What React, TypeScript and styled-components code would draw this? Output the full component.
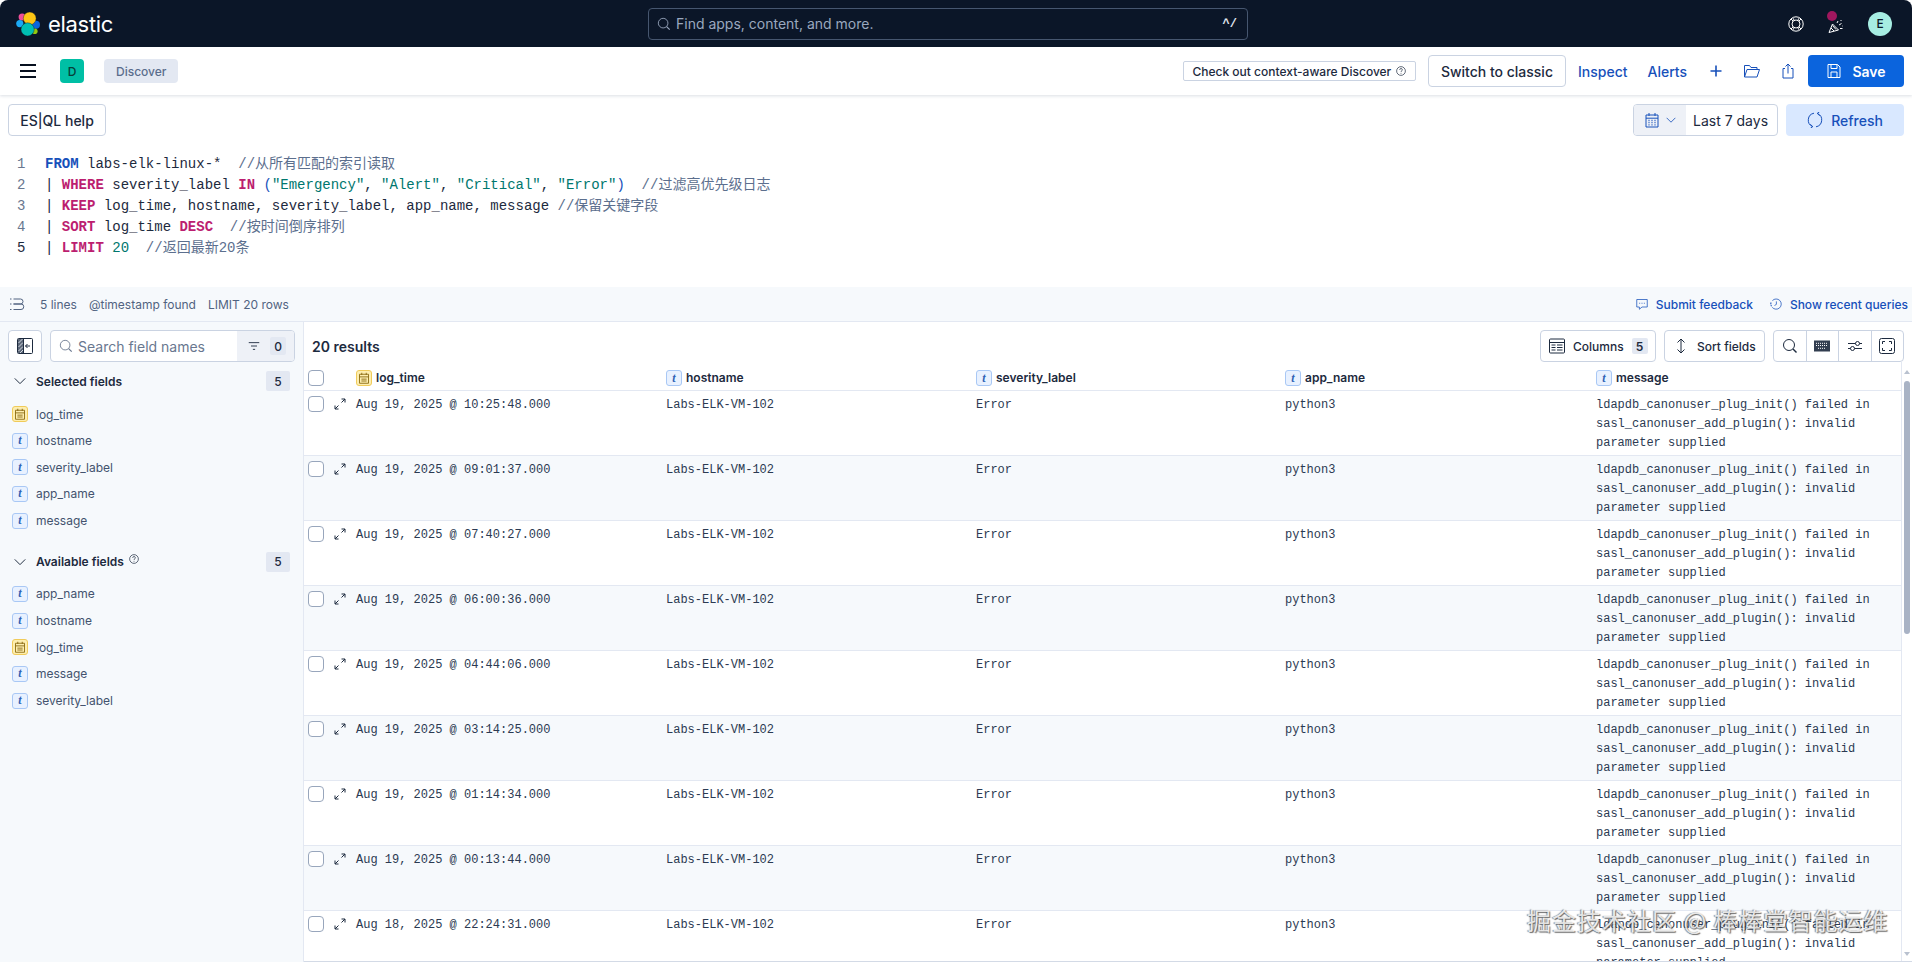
import React from 'react';
import styled, { createGlobalStyle } from 'styled-components';

const UI = `Inter, "Noto Sans", sans-serif`;
const MONO = `"Liberation Mono", "Noto Sans CJK SC", monospace`;

const Global = createGlobalStyle`
  html, body { margin: 0; padding: 0; background: #fff; }
  * { box-sizing: border-box; }
  #root { height: 962px; }
`;

const Page = styled.div`
  position: relative; display: flex; flex-direction: column; width: 1912px; height: 962px;
  overflow: hidden; font-family: ${UI}; color: #1d2a3e; background: #fff;
`;

/* ---------- top bar ---------- */
const TopBar = styled.header`
  flex: none; height: 47px; display: grid; grid-template-columns: 648px 600px 1fr; align-items: center;
  background: #0b1628; border-radius: 8px 8px 0 0;
`;
const Brand = styled.div`display: flex; align-items: center; gap: 8px; padding-left: 16px;`;
const Wordmark = styled.span`color: #fff; font-size: 22px; font-weight: 400; letter-spacing: -0.3px; line-height: 24px;`;
const GlobalSearch = styled.div`
  height: 32px; display: flex; align-items: center; gap: 5px; padding: 0 10px 0 8px;
  border: 1px solid #46566f; border-radius: 4px; color: #9aa8bf; font-size: 14px;
`;
const Shortcut = styled.span`margin-left: auto; font-family: ${MONO}; font-size: 12px; font-weight: 700; color: #e3e8f2;`;
const TopIcons = styled.div`display: flex; justify-content: flex-end; align-items: center; gap: 24px; padding-right: 20px; color: #fff;`;
const Avatar = styled.div`
  width: 24px; height: 24px; border-radius: 50%; background: #a6ede2; color: #0b1628;
  display: flex; align-items: center; justify-content: center; font-size: 12px; font-weight: 500;
`;

/* ---------- app bar ---------- */
const AppBar = styled.div`
  position: relative; flex: none; height: 48px; display: flex; align-items: center; padding: 0 8px 0 20px;
  background: #fff; box-shadow: 0 1px 3px rgba(30, 50, 90, .16);
`;
const SpaceBadge = styled.div`
  width: 24px; height: 24px; margin-left: 24px; border-radius: 4px; background: #00bfa5; color: #07403a;
  display: flex; align-items: center; justify-content: center; font-size: 12px; font-weight: 500;
`;
const Crumb = styled.div`
  height: 24px; margin-left: 20px; padding: 0 12px; border-radius: 4px; background: #e3e8f2; color: #5a6d8c;
  display: flex; align-items: center; font-size: 12px; font-weight: 500;
`;
const BarRight = styled.div`margin-left: auto; display: flex; align-items: center; gap: 12px;`;
const ContextBox = styled.div`
  height: 20px; width: 233px; display: flex; align-items: center; justify-content: center; gap: 5px;
  border: 1px solid #cad3e2; border-radius: 2px; font-size: 12px; font-weight: 500; color: #1d2a3e;
`;
const OutlineButton = styled.button`
  height: 32px; padding: 0 12px; font: 500 14px ${UI}; color: #1d2a3e; background: #fff;
  border: 1px solid #cad3e2; border-radius: 4px; white-space: nowrap;
`;
const NavGroup = styled.div`display: flex; align-items: center; gap: 20px; color: #1750ba;`;
const NavLink = styled.span`font-size: 14px; font-weight: 500; color: #1750ba; & + svg { margin-left: 1px; }`;
const SaveButton = styled.button`
  width: 96px; height: 32px; display: flex; align-items: center; justify-content: center; gap: 10px;
  background: #0b64dd; color: #fff; border: 0; border-radius: 4px; font: 600 14px ${UI};
`;

/* ---------- query ---------- */
const QueryBar = styled.div`
  flex: none; height: 57px; display: flex; justify-content: space-between; align-items: flex-start; padding: 9px 8px 0;
`;
const HelpButton = styled(OutlineButton)`width: 98px; padding: 0;`;
const QueryRight = styled.div`display: flex; gap: 8px;`;
const DatePicker = styled.div`
  width: 145px; height: 32px; display: flex; border: 1px solid #cad3e2; border-radius: 4px; overflow: hidden; font-size: 14px;
`;
const DatePrepend = styled.div`
  width: 52px; display: flex; align-items: center; justify-content: center; gap: 6px; background: #eef1f7; color: #1750ba;
`;
const DateValue = styled.div`flex: 1; display: flex; align-items: center; padding-left: 7px; white-space: nowrap; color: #1d2a3e;`;
const RefreshButton = styled.button`
  width: 118px; height: 32px; display: flex; align-items: center; justify-content: center; gap: 8px;
  background: #d9e8ff; color: #1750ba; border: 0; border-radius: 4px; font: 500 14px ${UI};
`;
const Editor = styled.div`flex: none; height: 135px; padding-top: 2px; font-family: ${MONO}; font-size: 14px; line-height: 21px;`;
const CodeLine = styled.div`display: flex; height: 21px; white-space: pre;`;
const LineNo = styled.span<{ $active?: boolean }>`
  width: 45px; padding-left: 17px; color: ${p => (p.$active ? '#1d2a3e' : '#69778f')};
`;
const Kw = styled.b<{ $blue?: boolean }>`color: ${p => (p.$blue ? '#1750ba' : '#bc1e70')}; font-weight: 700;`;
const Str = styled.span`color: #00776e;`;
const Cmt = styled.span`color: #5c6f8e;`;
const Paren = styled.span`color: #1750ba;`;
const Code = styled.span`color: #1d2a3e;`;

const EditorFoot = styled.div`
  flex: none; height: 35px; display: flex; align-items: center; padding: 0 4px 0 9px; background: #f6f9fc;
  border-bottom: 1px solid #e3e8f2; font-size: 12px; color: #516381;
`;
const FootStat = styled.span<{ $gap: number }>`margin-left: ${p => p.$gap}px; white-space: nowrap;`;
const FootLink = styled.span<{ $first?: boolean }>`
  display: flex; align-items: center; gap: 8px; color: #1750ba; font-weight: 500; white-space: nowrap;
  margin-left: ${p => (p.$first ? 'auto' : '17px')};
`;

/* ---------- main ---------- */
const Main = styled.div`flex: 1; min-height: 0; display: flex;`;
const Sidebar = styled.aside`flex: none; width: 304px; padding: 8px 0 0; background: #f6f9fc; border-right: 1px solid #e3e8f2;`;
const SideTop = styled.div`display: flex; gap: 8px; padding: 0 8px; height: 32px;`;
const IconButton = styled.button`
  width: 34px; height: 32px; padding: 0; display: flex; align-items: center; justify-content: center;
  background: #fff; border: 1px solid #cad3e2; border-radius: 4px;
`;
const FieldSearch = styled.div`
  width: 245px; display: flex; align-items: center; background: #fff; border: 1px solid #cad3e2; border-radius: 4px; overflow: hidden;
`;
const FieldInput = styled.div`
  flex: 1; display: flex; align-items: center; gap: 5px; padding-left: 8px; color: #69778f; font-size: 14px; white-space: nowrap;
`;
const FilterPart = styled.div`
  width: 57px; height: 100%; display: flex; align-items: center; gap: 10px; padding-left: 11px; background: #eef1f7; color: #1d2a3e;
`;
const FilterCount = styled.span`
  width: 16px; height: 18px; display: flex; align-items: center; justify-content: center; border-radius: 2px;
  background: #e3e8f2; font-size: 12px; font-weight: 500;
`;
const SectionHead = styled.div<{ $top: number }>`
  height: 20px; margin-top: ${p => p.$top}px; padding: 0 13px 0 14px; display: flex; align-items: center; gap: 10px;
  font-size: 12px; font-weight: 600; color: #1d2a3e;
`;
const Help = styled.span`display: inline-flex; margin-left: -5px; margin-top: -5px;`;
const CountBadge = styled.span`
  margin-left: auto; width: 24px; height: 20px; display: flex; align-items: center; justify-content: center;
  border-radius: 2px; background: #e3e8f2; font-size: 12px; font-weight: 500;
`;
const FieldList = styled.div<{ $top: number }>`margin-top: ${p => p.$top}px;`;
const FieldRow = styled.div`
  height: 26.67px; padding-left: 12px; display: flex; align-items: center; gap: 8px; font-size: 12px; color: #43536e;
`;
const TypeBox = styled.span<{ $date?: boolean }>`
  flex: none; width: 16px; height: 16px; display: inline-flex; align-items: center; justify-content: center; border-radius: 3px;
  background: ${p => (p.$date ? '#fdeeb0' : '#e8f1ff')};
  border: 1px solid ${p => (p.$date ? '#f0cb5a' : '#a9c8f5')};
  color: #2e62b5; font: italic 700 12px "Liberation Serif", serif;
`;

const Content = styled.section`flex: 1; min-width: 0; display: flex; flex-direction: column;`;
const Toolbar = styled.div`
  flex: none; height: 40px; padding: 8px 8px 0 8px; display: flex; align-items: center; gap: 8px;
`;
const Results = styled.div`margin-right: auto; font-size: 14px; font-weight: 600; color: #1d2a3e;`;
const ToolButton = styled.div<{ $w: number }>`
  width: ${p => p.$w}px; height: 32px; display: flex; align-items: center; gap: 8px; padding-left: 8px;
  background: #fff; border: 1px solid #cad3e2; border-radius: 4px; font-size: 12px; font-weight: 500; color: #1d2a3e;
`;
const ToolCount = styled.span`
  width: 16px; height: 16px; display: flex; align-items: center; justify-content: center;
  border-radius: 2px; background: #e3e8f2; font-size: 12px; font-weight: 600;
`;
const ToolGroup = styled.div`display: flex; width: 131px; height: 32px; border: 1px solid #cad3e2; border-radius: 4px; overflow: hidden;`;
const ToolCell = styled.div`
  flex: 1; display: flex; align-items: center; justify-content: center; color: #1d2a3e;
  & + & { border-left: 1px solid #cad3e2; }
`;

const TableWrap = styled.div`flex: 1; min-height: 0; display: flex;`;
const Table = styled.div`flex: 1; min-width: 0; padding-top: 8px; overflow: hidden;`;
const Cols = `grid-template-columns: 52px 310px 310px 309px 311px 1fr;`;
const HeadRow = styled.div`
  height: 21px; display: grid; ${Cols} border-bottom: 1px solid #e3e8f2; font-size: 12px; font-weight: 600; color: #1d2a3e;
`;
const HeadCell = styled.div`display: flex; align-items: flex-start; gap: 4px; line-height: 16px;`;
const Row = styled.div<{ $alt: boolean }>`
  height: 65px; display: grid; ${Cols} padding-top: 5px; border-bottom: 1px solid #e3e8f2;
  background: ${p => (p.$alt ? '#f6f9fc' : '#fff')};
`;
const Controls = styled.div`display: flex; align-items: flex-start; gap: 10px; padding-left: 4px;`;
const ExpandWrap = styled.span`margin-top: 2px; display: flex; color: #1d2a3e;`;
const Check = styled.span`
  width: 16px; height: 16px; flex: none; border: 1px solid #98a6bc; border-radius: 4px; background: #fff;
`;
const Cell = styled.div`
  font-family: ${MONO}; font-size: 12px; line-height: 19px; color: #2b3a52;
`;
const MsgCell = styled(Cell)`white-space: pre-line;`;
const Scrollbar = styled.div`
  position: relative; flex: none; width: 11px; border-left: 1px solid #e3e8f2; background: #fff;
`;
const Thumb = styled.div`position: absolute; left: 2px; top: 19px; width: 6px; height: 253px; background: #a9b3c5; border-radius: 3px;`;
const ArrowUp = styled.div`
  position: absolute; left: 2px; top: 8px; width: 0; height: 0;
  border: 3px solid transparent; border-top: 0; border-bottom: 4px solid #b9c1cf;
`;
const ArrowDown = styled.div`
  position: absolute; left: 2px; bottom: 6px; width: 0; height: 0;
  border: 3px solid transparent; border-bottom: 0; border-top: 4px solid #b9c1cf;
`;
const BottomLine = styled.div`position: absolute; left: 304px; right: 0; bottom: 0; height: 1px; background: #d3dae6;`;
const Watermark = styled.div`
  position: absolute; left: 1527px; top: 903px; font-family: "Noto Sans CJK SC", sans-serif; font-size: 24px; line-height: 34px;
  letter-spacing: 1px; white-space: pre; color: rgba(255, 255, 255, .82);
  text-shadow: 1px 1px 1px rgba(60, 60, 60, .75), -1px 0 1px rgba(60, 60, 60, .6);
`;
const PopperBox = styled.div`position: relative; width: 16px; height: 16px; color: #fff;`;
const PopperArt = styled.svg`position: absolute; top: 3px; left: 0;`;
const PopperDot = styled.span`position: absolute; left: -1px; top: -5px; width: 10px; height: 10px; border-radius: 50%; background: #a0175e;`;
const IconSvg = styled.svg`flex: none; display: block;`;

/* ---------- icons ---------- */
const Svg = ({ s = 16, children, sw = 1 }: { s?: number; children: React.ReactNode; sw?: number }) => (
  <IconSvg width={s} height={s} viewBox="0 0 16 16" fill="none" stroke="currentColor" strokeWidth={sw}>{children}</IconSvg>
);
const ElasticLogo = () => (
  <IconSvg width="24" height="24" viewBox="0 0 24 24">
    <circle cx="6.2" cy="5" r="3.6" fill="#f04e98" />
    <circle cx="3.8" cy="11.6" r="3.6" fill="#1ba9f5" />
    <circle cx="20" cy="12.8" r="4" fill="#0b64dd" />
    <circle cx="18.8" cy="19.2" r="2.8" fill="#93c90e" />
    <circle cx="13.7" cy="6.4" r="6.4" fill="#fec514" stroke="#0b1628" strokeWidth=".4" />
    <circle cx="11.6" cy="17.4" r="6.6" fill="#00bfb3" stroke="#0b1628" strokeWidth=".4" />
  </IconSvg>
);
const Search = ({ s = 16 }: { s?: number }) => (
  <Svg s={s}><circle cx="7" cy="7" r="5.5" /><path d="M11 11l3.5 3.5" strokeWidth="1.4" /></Svg>
);
const LifeRing = () => (
  <Svg><circle cx="8" cy="8" r="7.2" /><circle cx="8" cy="8" r="4" /><path d="M3 3l2.2 2.2M13 3l-2.2 2.2M3 13l2.2-2.2M13 13l-2.2-2.2M5 2.2l1.2 2M11 2.2l-1.2 2M5 13.8l1.2-2M11 13.8l-1.2-2" /></Svg>
);
const Popper = () => (
  <PopperBox>
    <PopperArt width="16" height="16" viewBox="0 0 16 16" fill="none" stroke="currentColor">
      <path d="M1 13.5L4.5 5l6 6-9.500 2.500zM3 9l3 3M4.500 6.500l3.500 4M9 4l1-2M11 6l2.500-1.500M12 9.500h2.500M12.500 1.500h1M14 7h.5" />
    </PopperArt>
    <PopperDot />
  </PopperBox>
);
const Burger = () => (
  <IconSvg width="16" height="16" viewBox="0 0 16 16" stroke="#07101f" strokeWidth="2"><path d="M0 2h16M0 8h16M0 14h16" /></IconSvg>
);
const QMark = ({ s = 10 }: { s?: number }) => (
  <Svg s={s} sw={1.1}><circle cx="8" cy="8" r="7" /><path d="M5.800 6.200C5.800 4.800 6.800 4 8 4s2.200.8 2.200 2c0 1.700-2.200 1.700-2.200 3.500M8 11v1.300" /></Svg>
);
const Plus = () => <Svg sw={1.6}><path d="M8 2.500v11M2.500 8h11" /></Svg>;
const Folder = () => <Svg><path d="M.5 14V2.500h5l1.500 2h6v2M.5 14h12.500l2.500-7.500H3z" /></Svg>;
const Share = () => <Svg><path d="M5 5.500H3v9.500h10V5.500h-2M8 10.500V1M5.500 3.500L8 1l2.500 2.500" /></Svg>;
const Floppy = () => <Svg><path d="M2 1.500h9.500l2.500 2.500v10.500H2zM5 1.500v4h6v-4M5 14.500v-5.500h6v5.500" /></Svg>;
const Calendar = () => (
  <Svg><path d="M2 3h12v12H2zM2 6.200h12M5 1v3M11 1v3" /><path d="M4.500 8.500h1M7.500 8.500h1M10.500 8.500h1M4.500 10.700h1M7.500 10.700h1M10.500 10.700h1M4.500 12.800h1M7.500 12.800h1M10.500 12.800h1" strokeWidth="1.300" /></Svg>
);
const Chevron = ({ s = 10 }: { s?: number }) => <Svg s={s} sw={1.3}><path d="M1 4.500l7 7 7-7" /></Svg>;
const Refresh = () => (
  <Svg><path d="M7 1.200A7 7 0 0 0 5.500 14.500M3.300 12.300L5.800 14.600 3.600 16M9 14.800A7 7 0 0 0 10.500 1.500M12.700 3.700L10.200 1.400 12.400 0" /></Svg>
);
const ListIcon = () => (
  <Svg><path d="M4.500 3h7a2.500 2.500 0 0 1 0 5H4.500M4.500 8h7.500a2.700 2.700 0 0 1 0 5.500H4.500M1 3h1.500M1 8h1.500M1 13.500h1.500" /></Svg>
);
const Feedback = () => (
  <Svg s={12}><path d="M1 2h14v10H8l-3.500 3v-3H1z" /><path d="M4.500 7h1M7.500 7h1M10.500 7h1" strokeWidth="1.500" /></Svg>
);
const History = () => (
  <Svg s={12}><path d="M3.200 3.500A6.800 6.800 0 1 1 3 12.500M8.500 4.500V8.500l-2.500 1.500" /><path d="M1 8.500a7 7 0 0 1 .5-2.500M2 11a7 7 0 0 1-.7-1.500" strokeWidth="1.400" /></Svg>
);
const CollapseSide = () => (
  <IconSvg width="16" height="18" viewBox="0 0 16 18" fill="none" stroke="#1d2a3e">
    <rect x=".5" y="1.500" width="15" height="15" rx="1" />
    <rect x="1" y="2" width="5.500" height="14" fill="#5c6778" stroke="none" />
    <path d="M1.500 6l4-4M1.500 10l4.500-4.500M1.500 14l4.500-4.500M3 16l3-3" stroke="#dfe4ec" strokeWidth=".9" />
    <path d="M6.500 1.500v15M13 9H8.500M10.500 7L8.500 9l2 2" />
  </IconSvg>
);
const FilterLines = () => <Svg s={12} sw={1.2}><path d="M1 3.500h14M4 8h8M6.500 12.500h3" /></Svg>;
const TableIcon = () => (
  <Svg><rect x=".5" y="1" width="15" height="14" rx="1" /><path d="M.5 4.500h15" /><path d="M2.500 7h4M8 7h5.500M2.500 9.500h4M8 9.500h5.500M2.500 12h4M8 12h5.500" /></Svg>
);
const SortIcon = () => <Svg><path d="M8 1v14M4.500 4.500L8 1l3.500 3.500M4.500 11.500L8 15l3.500-3.500" /></Svg>;
const KeyboardIcon = () => (
  <Svg><rect x=".5" y="3" width="15" height="10" fill="#1d2a3e" opacity=".9" /><path d="M2 5.300h12M2 7.500h12M4 10.300h8" stroke="#fff" strokeDasharray="1 1" /></Svg>
);
const Sliders = () => (
  <Svg><path d="M1 5.500h7.500M12.500 5.500h2.500M1 10.500h2.500M7.500 10.500H15" /><circle cx="10.500" cy="5.500" r="2" /><circle cx="5.500" cy="10.500" r="2" /></Svg>
);
const FullScreen = () => (
  <Svg><rect x=".5" y=".5" width="15" height="15" rx="2" /><path d="M3.500 6V3.500H6M10 3.500h2.500V6M12.500 10v2.500H10M6 12.500H3.500V10" /></Svg>
);
const Expand = () => (
  <IconSvg width="12" height="12" viewBox="0 0 12 12" fill="none" stroke="currentColor">
    <path d="M1 11L4.500 7.500M1 7.500V11h3.500M11 1L7.500 4.500M7.500 1H11v3.500" />
  </IconSvg>
);
const DateType = () => (
  <TypeBox $date>
    <svg width="12" height="12" viewBox="0 0 16 16" fill="none" stroke="#8a6a12" strokeWidth="1.200">
      <path d="M2 3h12v12H2zM2 6.500h12M5 1v3M11 1v3M4.500 9.500h7M4.500 12h7" />
    </svg>
  </TypeBox>
);
const TextType = () => <TypeBox>t</TypeBox>;

/* ---------- data ---------- */
const selected = ['log_time', 'hostname', 'severity_label', 'app_name', 'message'];
const available = ['app_name', 'hostname', 'log_time', 'message', 'severity_label'];
const times = [
  'Aug 19, 2025 @ 10:25:48.000', 'Aug 19, 2025 @ 09:01:37.000', 'Aug 19, 2025 @ 07:40:27.000',
  'Aug 19, 2025 @ 06:00:36.000', 'Aug 19, 2025 @ 04:44:06.000', 'Aug 19, 2025 @ 03:14:25.000',
  'Aug 19, 2025 @ 01:14:34.000', 'Aug 19, 2025 @ 00:13:44.000', 'Aug 18, 2025 @ 22:24:31.000',
];
const message = 'ldapdb_canonuser_plug_init() failed in\nsasl_canonuser_add_plugin(): invalid\nparameter supplied';

const Field = ({ name }: { name: string }) => (
  <FieldRow>{name === 'log_time' ? <DateType /> : <TextType />}{name}</FieldRow>
);

export default function App() {
  return (
    <Page>
      <Global />
      <TopBar>
        <Brand><ElasticLogo /><Wordmark>elastic</Wordmark></Brand>
        <GlobalSearch><Search s={14} />Find apps, content, and more.<Shortcut>^/</Shortcut></GlobalSearch>
        <TopIcons>
          <LifeRing /><Popper /><Avatar>E</Avatar>
        </TopIcons>
      </TopBar>

      <AppBar>
        <Burger />
        <SpaceBadge>D</SpaceBadge>
        <Crumb>Discover</Crumb>
        <BarRight>
          <ContextBox>Check out context-aware Discover <QMark /></ContextBox>
          <OutlineButton>Switch to classic</OutlineButton>
          <NavGroup>
            <NavLink>Inspect</NavLink>
            <NavLink>Alerts</NavLink>
            <Plus /><Folder /><Share />
          </NavGroup>
          <SaveButton><Floppy />Save</SaveButton>
        </BarRight>
      </AppBar>

      <QueryBar>
        <HelpButton>ES|QL help</HelpButton>
        <QueryRight>
          <DatePicker>
            <DatePrepend><Calendar /><Chevron /></DatePrepend>
            <DateValue>Last 7 days</DateValue>
          </DatePicker>
          <RefreshButton><Refresh />Refresh</RefreshButton>
        </QueryRight>
      </QueryBar>

      <Editor>
        <CodeLine><LineNo>1</LineNo><Code><Kw $blue>FROM</Kw> labs-elk-linux-*  <Cmt>//从所有匹配的索引读取</Cmt></Code></CodeLine>
        <CodeLine><LineNo>2</LineNo><Code>| <Kw>WHERE</Kw> severity_label <Kw>IN</Kw> <Paren>(</Paren><Str>"Emergency"</Str>, <Str>"Alert"</Str>, <Str>"Critical"</Str>, <Str>"Error"</Str><Paren>)</Paren>  <Cmt>//过滤高优先级日志</Cmt></Code></CodeLine>
        <CodeLine><LineNo>3</LineNo><Code>| <Kw>KEEP</Kw> log_time, hostname, severity_label, app_name, message <Cmt>//保留关键字段</Cmt></Code></CodeLine>
        <CodeLine><LineNo>4</LineNo><Code>| <Kw>SORT</Kw> log_time <Kw>DESC</Kw>  <Cmt>//按时间倒序排列</Cmt></Code></CodeLine>
        <CodeLine><LineNo $active>5</LineNo><Code>| <Kw>LIMIT</Kw> <Str>20</Str>  <Cmt>//返回最新20条</Cmt></Code></CodeLine>
      </Editor>

      <EditorFoot>
        <ListIcon />
        <FootStat $gap={15}>5 lines</FootStat>
        <FootStat $gap={12}>@timestamp found</FootStat>
        <FootStat $gap={12}>LIMIT 20 rows</FootStat>
        <FootLink $first><Feedback />Submit feedback</FootLink>
        <FootLink><History />Show recent queries</FootLink>
      </EditorFoot>

      <Main>
        <Sidebar>
          <SideTop>
            <IconButton><CollapseSide /></IconButton>
            <FieldSearch>
              <FieldInput><Search s={14} />Search field names</FieldInput>
              <FilterPart><FilterLines /><FilterCount>0</FilterCount></FilterPart>
            </FieldSearch>
          </SideTop>
          <SectionHead $top={9}><Chevron s={12} />Selected fields<CountBadge>5</CountBadge></SectionHead>
          <FieldList $top={9.7}>{selected.map(n => <Field key={n} name={n} />)}</FieldList>
          <SectionHead $top={18}><Chevron s={12} />Available fields<Help><QMark /></Help><CountBadge>5</CountBadge></SectionHead>
          <FieldList $top={8.7}>{available.map(n => <Field key={n} name={n} />)}</FieldList>
        </Sidebar>

        <Content>
          <Toolbar>
            <Results>20 results</Results>
            <ToolButton $w={116}><TableIcon />Columns<ToolCount>5</ToolCount></ToolButton>
            <ToolButton $w={101}><SortIcon />Sort fields</ToolButton>
            <ToolGroup>
              <ToolCell><Search /></ToolCell>
              <ToolCell><KeyboardIcon /></ToolCell>
              <ToolCell><Sliders /></ToolCell>
              <ToolCell><FullScreen /></ToolCell>
            </ToolGroup>
          </Toolbar>
          <TableWrap>
            <Table>
              <HeadRow>
                <Controls><Check /></Controls>
                <HeadCell><DateType />log_time</HeadCell>
                <HeadCell><TextType />hostname</HeadCell>
                <HeadCell><TextType />severity_label</HeadCell>
                <HeadCell><TextType />app_name</HeadCell>
                <HeadCell><TextType />message</HeadCell>
              </HeadRow>
              {times.map((t, i) => (
                <Row key={t} $alt={i % 2 === 1}>
                  <Controls><Check /><ExpandWrap><Expand /></ExpandWrap></Controls>
                  <Cell>{t}</Cell>
                  <Cell>Labs-ELK-VM-102</Cell>
                  <Cell>Error</Cell>
                  <Cell>python3</Cell>
                  <MsgCell>{message}</MsgCell>
                </Row>
              ))}
            </Table>
            <Scrollbar><ArrowUp /><Thumb /><ArrowDown /></Scrollbar>
          </TableWrap>
        </Content>
      </Main>
      <BottomLine />
      <Watermark>掘金技术社区 @ 棒棒堂智能运维</Watermark>
    </Page>
  );
}
